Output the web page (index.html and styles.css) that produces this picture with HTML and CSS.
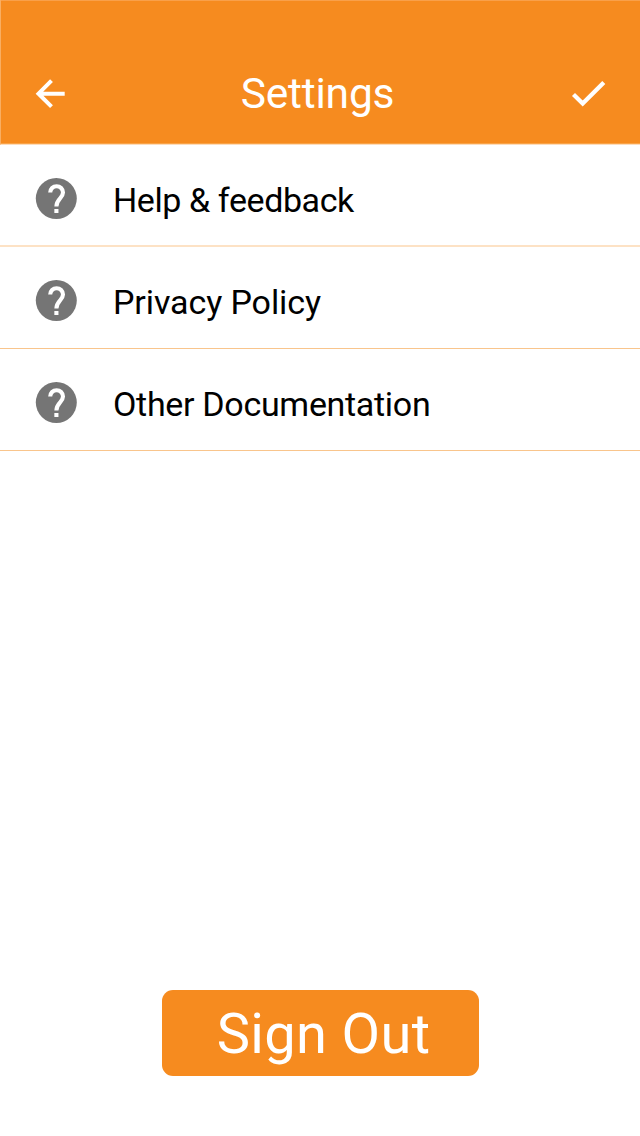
FILE: index.html
```html
<!DOCTYPE html>
<html lang="en">
<head>
<meta charset="utf-8">
<title>Settings</title>
<link rel="stylesheet" href="styles.css">
</head>
<body>
<div class="screen">
  <header class="bar">
    <svg class="back" viewBox="0 0 30 30"><path d="M15.500 1.700L2.500 14.700 15.500 27.700M2.500 14.700H28.700"/></svg>
    <h1 class="title">Settings</h1>
    <svg class="check" viewBox="0 0 34 26"><path d="M1.500 13.500L10.700 22.500 31.800 1.500"/></svg>
  </header>
  <ul class="list">
    <li class="row row-help"><svg class="help" viewBox="0 0 41 41"><circle cx="20.300" cy="20.500" r="20.500"/><path d="M14.200 14.600A6.400 6.400 0 0 1 27 14.600C27 20.200 20.400 20.700 20.400 28.500M20.400 30.900V35.100"/></svg><span class="label label-help">Help &amp; feedback</span></li>
    <li class="row"><svg class="help" viewBox="0 0 41 41"><circle cx="20.300" cy="20.500" r="20.500"/><path d="M14.200 14.600A6.400 6.400 0 0 1 27 14.600C27 20.200 20.400 20.700 20.400 28.500M20.400 30.900V35.100"/></svg><span class="label label-privacy">Privacy Policy</span></li>
    <li class="row"><svg class="help" viewBox="0 0 41 41"><circle cx="20.300" cy="20.500" r="20.500"/><path d="M14.200 14.600A6.400 6.400 0 0 1 27 14.600C27 20.200 20.400 20.700 20.400 28.500M20.400 30.900V35.100"/></svg><span class="label label-docs">Other Documentation</span></li>
  </ul>
  <button class="signout">Sign Out</button>
</div>
</body>
</html>
```
FILE: styles.css
```css
* { box-sizing: border-box; }
body { margin: 0; background: #fff; font-family: Roboto, sans-serif; }
.screen { width: 640px; height: 1136px; display: flex; flex-direction: column; }
.bar { height: 145px; flex: none; padding: 43px 34px 0 35px; background: #f68b1f; color: #fff; border-left: 1px solid #f9ae62; border-bottom: 1px solid #fddcbb; box-shadow: inset 0 1px #f9a04a, inset 0 -1px #f9a347; display: grid; grid-template-columns: 34px 1fr 34px; align-items: center; }
.back { width: 30px; height: 30px; fill: none; stroke: #fff; stroke-width: 4; overflow: visible; }
.check { width: 34px; height: 26px; fill: none; stroke: #fff; stroke-width: 4.3; overflow: visible; }
.title { margin: 0 7px 0 0; text-align: center; font-size: 42.5px; line-height: 50px; font-weight: 400; letter-spacing: -0.2px; }
.list { margin: 0; padding: 0; list-style: none; }
.row { height: 102px; display: flex; align-items: center; padding: 5px 36px 0; gap: 36px; border-bottom: 1px solid #f9c58c; }
.row-help { border-bottom: 2px solid #fde2c5; padding-top: 7px; }
.help { width: 41px; height: 41px; fill: #757575; overflow: visible; }
.help path { fill: none; stroke: #fff; stroke-width: 4.1; }
.label { font-size: 34px; line-height: 40px; padding-top: 4px; color: #000; white-space: nowrap; }
.label-help { letter-spacing: -0.4px; padding-top: 2px; }
.label-privacy { letter-spacing: -0.1px; }
.label-docs { letter-spacing: -0.31px; }
.signout { margin: auto 0 60px; align-self: center; width: 317px; height: 86px; padding: 2px 0 0 7px; border: 0; border-radius: 11px; background: #f68b1f; color: #fff; font: 400 56px/84px Roboto, sans-serif; letter-spacing: 0.35px; }
```
